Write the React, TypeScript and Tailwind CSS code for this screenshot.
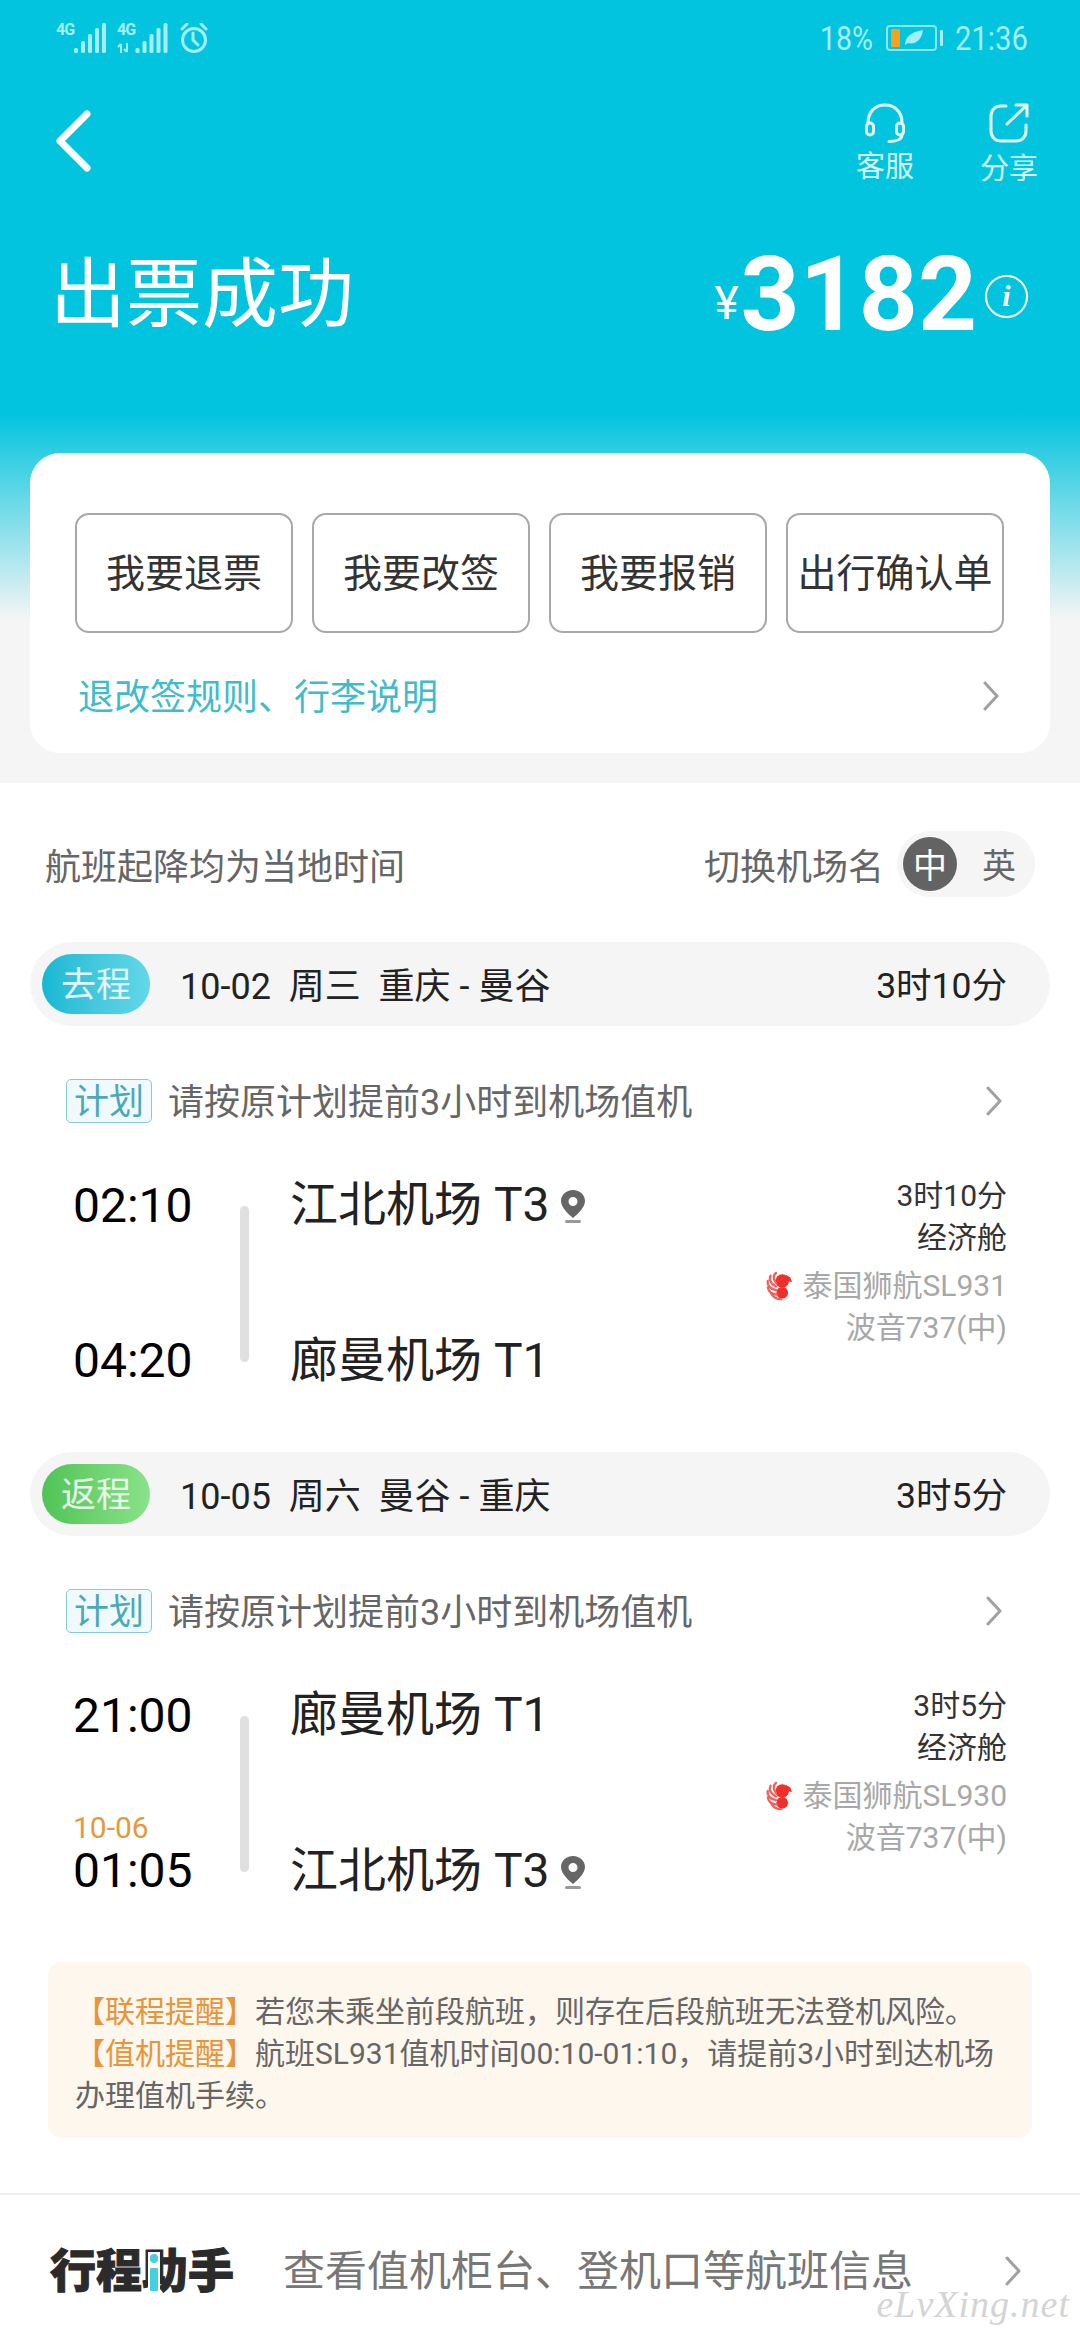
import React from "react"

function Chevron({ className = "" }: { className?: string }) {
  return (
    <svg viewBox="0 0 18 30" className={`w-[18px] h-[30px] shrink-0 ${className}`} fill="none" stroke="#a0a0a0" strokeWidth="3" strokeLinecap="round" strokeLinejoin="round">
      <path d="M3 2 L15 15 L3 28" />
    </svg>
  )
}

function Bars({ w = 32 }: { w?: number }) {
  return (
    <svg viewBox="0 0 32 30" width={w} height="30" fill="#a4eef8">
      <rect x="0" y="25" width="4" height="5" rx="1.5" />
      <rect x="7" y="18" width="4" height="12" rx="1.5" />
      <rect x="14" y="11" width="4" height="19" rx="1.5" />
      <rect x="21" y="5" width="4" height="25" rx="1.5" />
      <rect x="28" y="0" width="4" height="30" rx="1.5" />
    </svg>
  )
}

function FourG() {
  return (
    <span className="font-bold text-[16px] leading-[14px] tracking-[-1px] text-[#a4eef8]">
      4G
    </span>
  )
}

function StatusBar() {
  return (
    <div className="h-[76px] flex items-center justify-between pl-[56px] pr-[53px]">
      <div className="flex items-center">
        <div className="h-[30px] w-[18px] flex items-start">
          <FourG />
        </div>
        <Bars />
        <div className="ml-[11px] h-[30px] w-[18px] flex flex-col justify-between">
          <FourG />
          <svg viewBox="0 0 18 10" width="18" height="10" fill="none" stroke="#a4eef8" strokeWidth="2">
            <path d="M4 10 V1 M1 4 L4 1 M10 0 V9 M7 6 L10 9" />
          </svg>
        </div>
        <Bars w={33} />
        <svg viewBox="0 0 28 30" width="28" height="30" className="ml-[12px]" fill="none" stroke="#a4eef8" strokeWidth="3" strokeLinecap="round">
          <circle cx="14" cy="17" r="11.5" />
          <path d="M13 10 V17 L18 22" />
          <path d="M2 6 L7 1 M26 6 L21 1" />
        </svg>
      </div>
      <div className="flex items-center text-[34px] leading-none text-[#a4eef8]">
        <span className="w-[52px] mr-[14px] whitespace-nowrap origin-left scale-x-[0.84]">18%</span>
        <div className="w-[51px] h-[26px] rounded-[4px] border-2 border-[#8be4f0] flex items-center pl-[3px]">
          <div className="w-[9px] h-[18px] bg-[#f7a11d] rounded-[1px]" />
          <svg viewBox="0 0 20 16" width="20" height="16" className="ml-[4px]" fill="#a4eef8">
            <path d="M1 15 C1 7 7 2 19 0 C18 9 12 15 4 13 Z" />
          </svg>
        </div>
        <div className="ml-[3px] w-[3px] h-[16px] bg-[#a4eef8] rounded-[1px]" />
        <span className="ml-[12px] w-[72px] whitespace-nowrap origin-left scale-x-[0.86]">21:36</span>
      </div>
    </div>
  )
}

function NavBar() {
  return (
    <div className="mt-[27px] h-[84px] flex items-start justify-between pl-[55px] pr-[42px]">
      <svg viewBox="0 0 36 62" width="36" height="62" className="mt-[7px]" fill="none" stroke="#ffffff" strokeWidth="7" strokeLinecap="round" strokeLinejoin="round">
        <path d="M32 4 L5 31 L32 58" />
      </svg>
      <div className="flex gap-[66px] text-[29px] leading-[30px] text-[#d8f8fc]">
        <div className="flex flex-col items-center">
          <svg viewBox="0 0 40 40" width="40" height="40" fill="none" stroke="#e4fbfe" strokeWidth="3" strokeLinecap="round">
            <path d="M3 20 C3 9 10 2 20 2 C30 2 37 9 37 20" />
            <rect x="1.5" y="20" width="7" height="12" rx="3.5" />
            <rect x="31.5" y="20" width="7" height="12" rx="3.5" />
            <path d="M37 32 C37 36 32 38.5 24 38.5" />
          </svg>
          <span className="mt-[9px]">客服</span>
        </div>
        <div className="flex flex-col items-center">
          <svg viewBox="0 0 40 40" width="40" height="40" fill="none" stroke="#e4fbfe" strokeWidth="3" strokeLinecap="round" strokeLinejoin="round">
            <path d="M17 3 H12 C6 3 2 7 2 13 V28 C2 34 6 38 12 38 H27 C33 38 37 34 37 28 V22" />
            <path d="M18 21 L38 2 M27 2 H38 V13" />
          </svg>
          <span className="mt-[11px]">分享</span>
        </div>
      </div>
    </div>
  )
}

function TitleRow() {
  return (
    <div className="mt-[63px] h-[90px] flex items-center justify-between pl-[50px] pr-[52px] text-white">
      <h1 className="text-[76px] leading-[90px] font-normal">出票成功</h1>
      <div className="flex items-center">
        <span className="text-[46px] leading-none mt-[16px] mr-[2px]">¥</span>
        <span className="text-[103px] leading-[90px] font-bold">3182</span>
        <div className="ml-[8px] mt-[2px] w-[43px] h-[43px] rounded-full border-[2.5px] border-white flex items-center justify-center font-[family-name:'Liberation_Serif',serif] italic font-bold text-[30px] leading-none">
          i
        </div>
      </div>
    </div>
  )
}

function ActionCard() {
  const actions = ["我要退票", "我要改签", "我要报销", "出行确认单"]
  return (
    <div className="mx-[30px] mt-[113px] h-[300px] rounded-[30px] bg-white pt-[60px] pl-[45px] pr-[46px]">
      <div className="grid grid-cols-4 gap-[19px]">
        {actions.map((a) => (
          <div key={a} className="h-[120px] pt-[3px] rounded-[14px] border-2 border-[#a8a8a8] flex items-center justify-center text-[39px] text-[#333333] whitespace-nowrap">
            {a}
          </div>
        ))}
      </div>
      <div className="mt-[33px] h-[60px] flex items-center justify-between pl-[3px] pr-[4px]">
        <span className="pt-[3px] text-[36px] text-[#3fbccb]">退改签规则、行李说明</span>
        <Chevron />
      </div>
    </div>
  )
}

function Pin() {
  return (
    <svg viewBox="0 0 24 33" width="24" height="33" className="ml-[11px] mt-[2px]" fill="#666666">
      <path fillRule="evenodd" d="M12 0 C19 0 24 5 24 11 C24 17 17 24 12 28 C7 24 0 17 0 11 C0 5 5 0 12 0 Z M12 7 A4.5 4.5 0 1 0 12 16 A4.5 4.5 0 1 0 12 7 Z" />
      <rect x="4" y="30" width="16" height="3" rx="1.5" fill="#999999" />
    </svg>
  )
}

function AirlineLogo() {
  return (
    <svg viewBox="0 0 30 33" width="27" height="30" className="mr-[9px]" fill="none">
      <circle cx="18" cy="11" r="7.5" fill="#ee2f2a" />
      <path d="M22 4 L27 7 L29 12 L24 11 Z" fill="#ee2f2a" />
      <circle cx="18" cy="24" r="6.5" fill="#ee2f2a" />
      <g stroke="#f0625c" strokeWidth="2.6" strokeLinecap="round">
        <path d="M11 2 C8 5 8 9 11 13" />
        <path d="M5 5 C3 9 5 14 11 17" />
        <path d="M2 11 C1 16 5 20 11 21" />
        <path d="M2 18 C3 23 7 26 12 26" />
        <path d="M6 25 C8 29 12 31 17 31" />
      </g>
    </svg>
  )
}

type Segment = {
  tag: string
  tagClass: string
  route: string
  duration: string
  depTime: string
  depName: string
  depPin?: boolean
  arrTime: string
  arrName: string
  arrPin?: boolean
  nextDay?: string
  flightDuration: string
  flightNo: string
}

function SegmentBlock({ seg }: { seg: Segment }) {
  return (
    <section className="mb-[63px]">
      <div className="mx-[30px] h-[84px] rounded-full bg-[#f5f5f5] flex items-center pl-[12px] pr-[43px]">
        <div className={`w-[108px] h-[60px] pt-[4px] rounded-full flex items-center justify-center text-[35px] text-white/85 ${seg.tagClass}`}>
          {seg.tag}
        </div>
        <span className="ml-[30px] pt-[5px] text-[36px] text-[#222222] whitespace-pre">{seg.route}</span>
        <span className="ml-auto pt-[5px] text-[35.5px] text-[#222222]">{seg.duration}</span>
      </div>

      <div className="mt-[53px] h-[44px] flex items-center pl-[66px] pr-[77px]">
        <div className="w-[86px] h-[44px] pt-[4px] rounded-[5px] border border-[#85cbd6] bg-[#f0fafc] flex items-center justify-center text-[35px] text-[#4aa9b8]">
          计划
        </div>
        <span className="ml-[16px] pt-[4px] text-[36px] text-[#666666]">请按原计划提前3小时到机场值机</span>
        <Chevron className="ml-auto" />
      </div>

      <div className="mt-[52px] h-[214px] flex pl-[73px] pr-[73px]">
        <div className="w-[167px] pt-[3px] flex flex-col justify-between text-[48px] leading-[56px] text-black">
          <span>{seg.depTime}</span>
          <div className="flex flex-col">
            {seg.nextDay && <span className="text-[30px] leading-[30px] text-[#e39a3e]">{seg.nextDay}</span>}
            <span>{seg.arrTime}</span>
          </div>
        </div>
        <div className="mt-[31px] w-[9px] h-[156px] rounded-full bg-[#e0e0e0]" />
        <div className="ml-[41px] pt-[2px] flex flex-col justify-between text-[48px] leading-[56px] text-[#222222]">
          <div className="flex items-center">
            {seg.depName}
            {seg.depPin && <Pin />}
          </div>
          <div className="flex items-center">
            {seg.arrName}
            {seg.arrPin && <Pin />}
          </div>
        </div>
        <div className="ml-auto flex flex-col items-end text-[30px] leading-[42px] text-[#333333]">
          <span>{seg.flightDuration}</span>
          <span>经济舱</span>
          <div className="mt-[6px] flex items-center text-[#a8a8a8]">
            <AirlineLogo />
            <span>泰国狮航{seg.flightNo}</span>
          </div>
          <span className="text-[#a8a8a8]">波音737(中)</span>
        </div>
      </div>
    </section>
  )
}

const segments: Segment[] = [
  {
    tag: "去程",
    tagClass: "bg-gradient-to-r from-[#12b8d3] to-[#62d8e8]",
    route: "10-02  周三  重庆 - 曼谷",
    duration: "3时10分",
    depTime: "02:10",
    depName: "江北机场 T3",
    depPin: true,
    arrTime: "04:20",
    arrName: "廊曼机场 T1",
    flightDuration: "3时10分",
    flightNo: "SL931",
  },
  {
    tag: "返程",
    tagClass: "bg-gradient-to-r from-[#4fc455] to-[#8ae28a]",
    route: "10-05  周六  曼谷 - 重庆",
    duration: "3时5分",
    depTime: "21:00",
    depName: "廊曼机场 T1",
    arrTime: "01:05",
    arrName: "江北机场 T3",
    arrPin: true,
    nextDay: "10-06",
    flightDuration: "3时5分",
    flightNo: "SL930",
  },
]

export default function App() {
  return (
    <div className="relative w-[1080px] h-[2340px] overflow-hidden bg-white font-[family-name:Roboto,'Noto_Sans_CJK_SC',sans-serif]">
      <header className="h-[783px] bg-[linear-gradient(#02c4de_0,#02c4de_413px,#f5f5f5_620px)]">
        <StatusBar />
        <NavBar />
        <TitleRow />
        <ActionCard />
      </header>

      <div className="pt-[48px] pl-[45px] pr-[45px] h-[159px] flex items-start justify-between">
        <span className="h-[66px] pt-[8px] flex items-center text-[36px] text-[#666666]">航班起降均为当地时间</span>
        <div className="flex items-center">
          <span className="pt-[8px] text-[36px] text-[#666666]">切换机场名</span>
          <div className="ml-[13px] w-[138px] h-[66px] rounded-full bg-[#f5f5f5] flex items-center pl-[6px]">
            <div className="w-[54px] h-[54px] pt-[4px] rounded-full bg-[#636363] flex items-center justify-center text-[34px] text-white">中</div>
            <span className="ml-[25px] pt-[4px] text-[34px] text-[#666666]">英</span>
          </div>
        </div>
      </div>

      {segments.map((s) => (
        <SegmentBlock key={s.tag} seg={s} />
      ))}

      <div className="mt-[2px] mx-[48px] h-[176px] rounded-[14px] bg-[#fef7ee] pt-[29px] pl-[27px] pr-[27px] text-[30px] leading-[42px] text-[#666666]">
        <p>
          <span className="text-[#e8943a]">【联程提醒】</span>若您未乘坐前段航班，则存在后段航班无法登机风险。
        </p>
        <p>
          <span className="text-[#e8943a]">【值机提醒】</span>航班SL931值机时间00:10-01:10，请提前3小时到达机场办理值机手续。
        </p>
      </div>

      <div className="mt-[55px] h-[2px] bg-[#f0f0f0]" />

      <div className="h-[152px] flex items-center pl-[50px] pr-[58px]">
        <div className="relative text-[46px] leading-[56px] font-black [-webkit-text-stroke:1px_#2b2b2b] text-[#2b2b2b] whitespace-nowrap">
          行程助手
          <div className="absolute left-[98px] top-[9px] w-[12px] h-[41px] bg-white flex flex-col items-center justify-between py-[2px]">
            <div className="w-[8px] h-[9px] rounded-full bg-[#45cfe0]" />
            <div className="w-[8px] h-[23px] rounded-[1px] bg-[#45cfe0]" />
          </div>
        </div>
        <span className="ml-[49px] text-[42px] text-[#777777] whitespace-nowrap">查看值机柜台、登机口等航班信息</span>
        <Chevron className="ml-auto" />
      </div>

      <div className="absolute right-[10px] bottom-[14px] font-[family-name:'Liberation_Serif',serif] italic text-[38px] leading-[44px] tracking-[1px] text-[#d4d4d4]">
        eLvXing.net
      </div>
    </div>
  )
}
